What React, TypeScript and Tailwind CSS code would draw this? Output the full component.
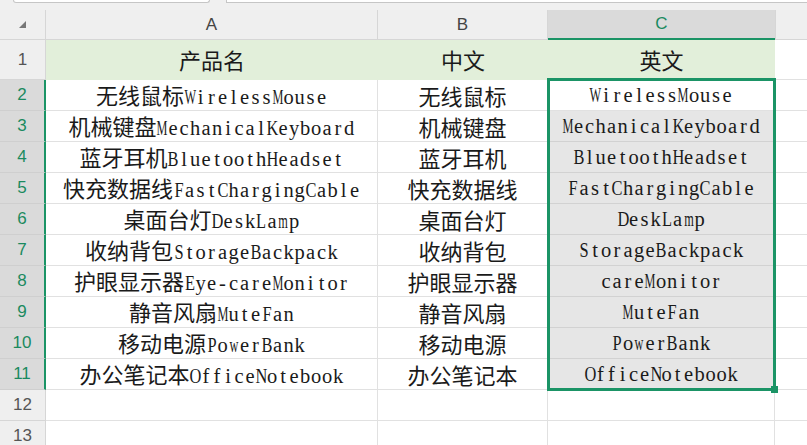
import React from "react";

const rows = [
  ["无线鼠标WirelessMouse", "无线鼠标", "WirelessMouse"],
  ["机械键盘MechanicalKeyboard", "机械键盘", "MechanicalKeyboard"],
  ["蓝牙耳机BluetoothHeadset", "蓝牙耳机", "BluetoothHeadset"],
  ["快充数据线FastChargingCable", "快充数据线", "FastChargingCable"],
  ["桌面台灯DeskLamp", "桌面台灯", "DeskLamp"],
  ["收纳背包StorageBackpack", "收纳背包", "StorageBackpack"],
  ["护眼显示器Eye-careMonitor", "护眼显示器", "careMonitor"],
  ["静音风扇MuteFan", "静音风扇", "MuteFan"],
  ["移动电源PowerBank", "移动电源", "PowerBank"],
  ["办公笔记本OfficeNotebook", "办公笔记本", "OfficeNotebook"],
];

// half-width latin glyphs: a serif face squeezed into fixed 11px slots
const Latin = ({ ch }: { ch: string }) => {
  let cls = "inline-block w-[11px] text-center";
  if ("WMmw".includes(ch)) cls = "-mx-[3.5px] inline-block w-[18px] text-center scale-x-[0.6]";
  else if (/[A-Z]/.test(ch)) cls = "-mx-[1.5px] inline-block w-[14px] text-center scale-x-[0.8]";
  return <span className={cls}>{ch}</span>;
};

// split a cell value into CJK / latin runs so each gets its own font
const Mixed = ({ text }: { text: string }) => {
  const parts = text.match(/[\u4e00-\u9fff]+|[^\u4e00-\u9fff]+/g) ?? [];
  return (
    <span className="whitespace-nowrap leading-none text-[#1a1a1a]">
      {parts.map((p, i) =>
        /[\u4e00-\u9fff]/.test(p) ? (
          <span key={i} className="font-['Noto_Sans_CJK_SC',sans-serif] text-[22px]">
            {p}
          </span>
        ) : (
          <span key={i} className="font-['Liberation_Serif',serif] text-[20.5px]">
            {p.split("").map((c, j) => (
              <Latin key={j} ch={c} />
            ))}
          </span>
        )
      )}
    </span>
  );
};

const RowHead = ({ n, active }: { n: number; active?: boolean }) => (
  <div
    className={
      active
        ? "flex h-full w-[46px] shrink-0 items-center justify-center border-b border-r-2 border-b-[#cfcfcf] border-r-[#1b9466] bg-[#dadada] font-['Liberation_Sans',sans-serif] text-[17px] text-[#1a8a5f]"
        : "flex h-full w-[46px] shrink-0 items-center justify-center border-b border-r border-[#d6d6d6] bg-[#efefef] font-['Liberation_Sans',sans-serif] text-[17px] text-[#555]"
    }
  >
    {n}
  </div>
);

export default function App() {
  return (
    <div className="h-[445px] w-[807px] overflow-hidden bg-white">
      {/* bottom edge of the formula bar */}
      <div className="flex h-[10px] gap-[16px] bg-[#f0f0f0] pl-[13px]">
        <div className="h-[3px] w-[197px] rounded-b-[3px] border-x border-b border-[#c6c6c6] bg-white" />
        <div className="h-[3px] flex-1 border-b border-l border-[#c6c6c6] bg-white" />
      </div>

      <div className="relative">
        {/* column headers */}
        <div className="flex h-[30px] bg-[#efefef] font-['Liberation_Sans',sans-serif] text-[17px] text-[#444]">
          <div className="flex w-[46px] shrink-0 items-center justify-center border-b border-r border-[#d6d6d6]">
            <svg width="7" height="7" viewBox="0 0 7 7">
              <path d="M7 0 L7 7 L0 7 Z" fill="#777" />
            </svg>
          </div>
          <div className="flex w-[332px] shrink-0 items-center justify-center border-b border-r border-[#d6d6d6]">A</div>
          <div className="flex w-[170px] shrink-0 items-center justify-center border-b border-r border-[#d6d6d6]">B</div>
          <div className="flex w-[227px] shrink-0 items-center justify-center border-b-2 border-[#1b9466] bg-[#dadada] text-[#1a8a5f]">C</div>
          <div className="flex-1 border-b border-l border-[#d6d6d6]" />
        </div>

        {/* row 1: header row */}
        <div className="flex h-[40px]">
          <RowHead n={1} />
          <div className="flex w-[729px] shrink-0 items-center border-b border-[#e2efda] bg-[#e2efda]">
            <div className="flex w-[332px] justify-center">
              <Mixed text="产品名" />
            </div>
            <div className="flex w-[170px] justify-center">
              <Mixed text="中文" />
            </div>
            <div className="flex w-[227px] justify-center">
              <Mixed text="英文" />
            </div>
          </div>
          <div className="flex-1 border-b border-[#e1e1e1]" />
        </div>

        {rows.map((r, i) => (
          <div key={i} className="flex h-[31px]">
            <RowHead n={i + 2} active />
            <div className="flex w-[332px] shrink-0 items-center justify-center border-b border-r border-[#e1e1e1]">
              <Mixed text={r[0]} />
            </div>
            <div className="flex w-[170px] shrink-0 items-center justify-center border-b border-r border-[#e1e1e1]">
              <Mixed text={r[1]} />
            </div>
            <div
              className={
                i === 0
                  ? "flex w-[227px] shrink-0 items-center justify-center border-b border-r border-[#e1e1e1] bg-white"
                  : "flex w-[227px] shrink-0 items-center justify-center border-b border-r border-[#d2d2d2] bg-[#e6e6e6]"
              }
            >
              <Mixed text={r[2]} />
            </div>
            <div className="flex-1 border-b border-[#e1e1e1]" />
          </div>
        ))}

        {[12, 13].map((n) => (
          <div key={n} className="flex h-[31px]">
            <RowHead n={n} />
            <div className="w-[332px] shrink-0 border-b border-r border-[#e1e1e1]" />
            <div className="w-[170px] shrink-0 border-b border-r border-[#e1e1e1]" />
            <div className="w-[227px] shrink-0 border-b border-r border-[#e1e1e1]" />
            <div className="flex-1 border-b border-[#e1e1e1]" />
          </div>
        ))}

        {/* selection box C2:C11 */}
        <div className="pointer-events-none absolute left-[547px] top-[68px] h-[313px] w-[229px] border-[3px] border-[#1b9466]" />
        <div className="pointer-events-none absolute left-[771px] top-[376px] h-[7px] w-[7px] bg-[#1b9466]" />
      </div>
    </div>
  );
}
